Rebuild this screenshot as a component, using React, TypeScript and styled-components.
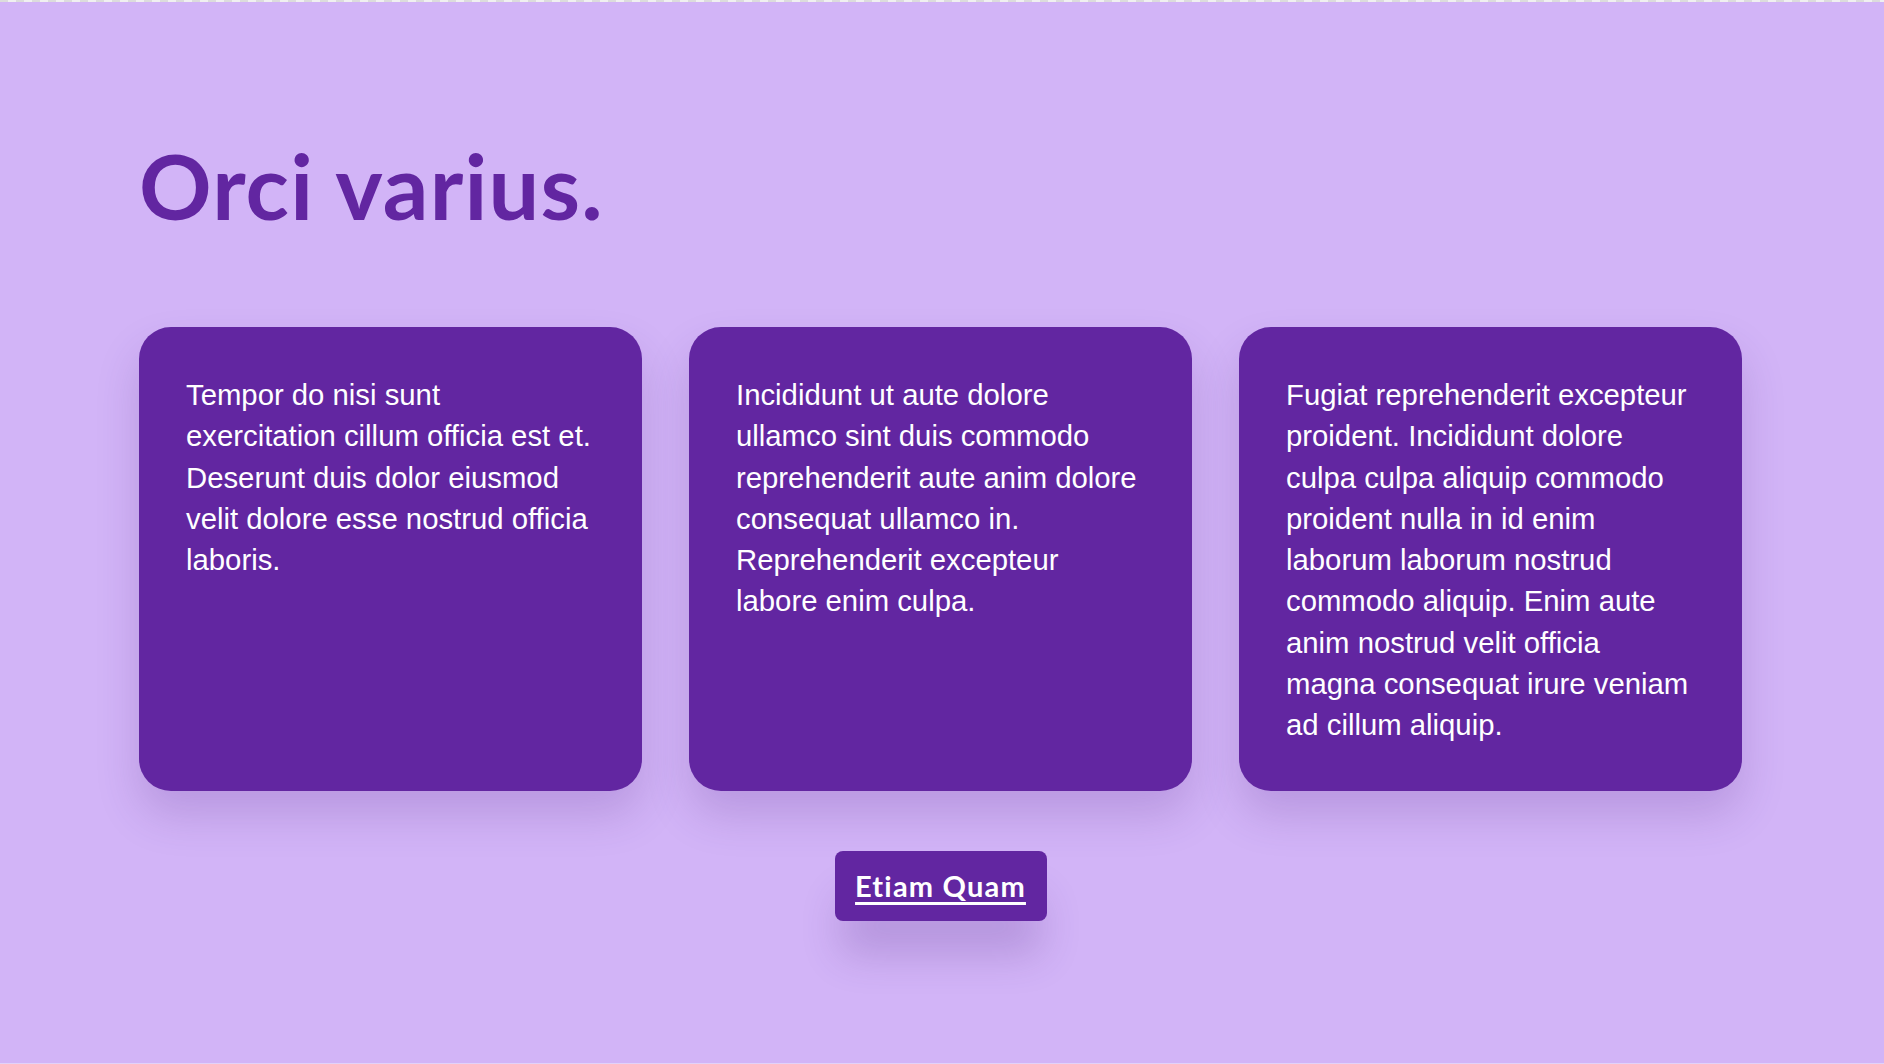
import React from "react";
import styled, { createGlobalStyle } from "styled-components";

const Global = createGlobalStyle`
  html, body {
    margin: 0;
    padding: 0;
    background: #d2b4f7;
  }
  * { box-sizing: border-box; }
`;

const Page = styled.div`
  min-height: 1064px;
  display: flex;
  flex-direction: column;
  background: #d2b4f7;
`;

const TopStrip = styled.div`
  height: 2px;
  background: repeating-linear-gradient(
    90deg,
    #dcdcdc 0px,
    #dcdcdc 8px,
    #f0f0f0 8px,
    #f0f0f0 16px
  );
`;

const Main = styled.main`
  flex: 1;
  padding: 138px 142px 0 139px;
  display: flex;
  flex-direction: column;
`;

const Heading = styled.h1`
  margin: 0;
  font-family: Lato, "Noto Sans", sans-serif;
  font-weight: 700;
  font-size: 90px;
  line-height: 90px;
  color: #6226a1;
  letter-spacing: 1.2px;
`;

const CardGrid = styled.div`
  margin-top: 97px;
  display: grid;
  grid-template-columns: repeat(3, 1fr);
  gap: 47px;
  align-items: stretch;
`;

const Card = styled.div`
  background: #6226a1;
  border-radius: 32px;
  padding: 47px 47px 45px;
  box-shadow: 0 24px 44px rgba(70, 30, 120, 0.18);
`;

const CardText = styled.p`
  margin: 0;
  font-family: "Liberation Sans", Arial, sans-serif;
  font-size: 29.3px;
  line-height: 41.3px;
  color: #ffffff;
`;

const ButtonRow = styled.div`
  display: flex;
  justify-content: center;
  margin-top: 60px;
`;

const Button = styled.a`
  display: inline-flex;
  align-items: center;
  justify-content: center;
  width: 212px;
  height: 70px;
  border-radius: 8px;
  background: #6226a1;
  color: #ffffff;
  font-family: Lato, "Noto Sans", sans-serif;
  font-weight: 700;
  font-size: 29px;
  letter-spacing: 1.2px;
  text-decoration: underline;
  text-decoration-thickness: 3px;
  text-underline-offset: 5px;
  box-shadow: 0 40px 40px -6px rgba(70, 30, 120, 0.2);
  cursor: pointer;
`;

const BottomLine = styled.div`
  height: 1px;
  background: #e2d2f9;
`;

const cards = [
  "Tempor do nisi sunt exercitation cillum officia est et. Deserunt duis dolor eiusmod velit dolore esse nostrud officia laboris.",
  "Incididunt ut aute dolore ullamco sint duis commodo reprehenderit aute anim dolore consequat ullamco in. Reprehenderit excepteur labore enim culpa.",
  "Fugiat reprehenderit excepteur proident. Incididunt dolore culpa culpa aliquip commodo proident nulla in id enim laborum laborum nostrud commodo aliquip. Enim aute anim nostrud velit officia magna consequat irure veniam ad cillum aliquip.",
];

export default function App() {
  return (
    <>
      <Global />
      <Page>
        <TopStrip />
        <Main>
          <Heading>Orci varius.</Heading>
          <CardGrid>
            {cards.map((t, i) => (
              <Card key={i}>
                <CardText>{t}</CardText>
              </Card>
            ))}
          </CardGrid>
          <ButtonRow>
            <Button>Etiam Quam</Button>
          </ButtonRow>
        </Main>
        <BottomLine />
      </Page>
    </>
  );
}
